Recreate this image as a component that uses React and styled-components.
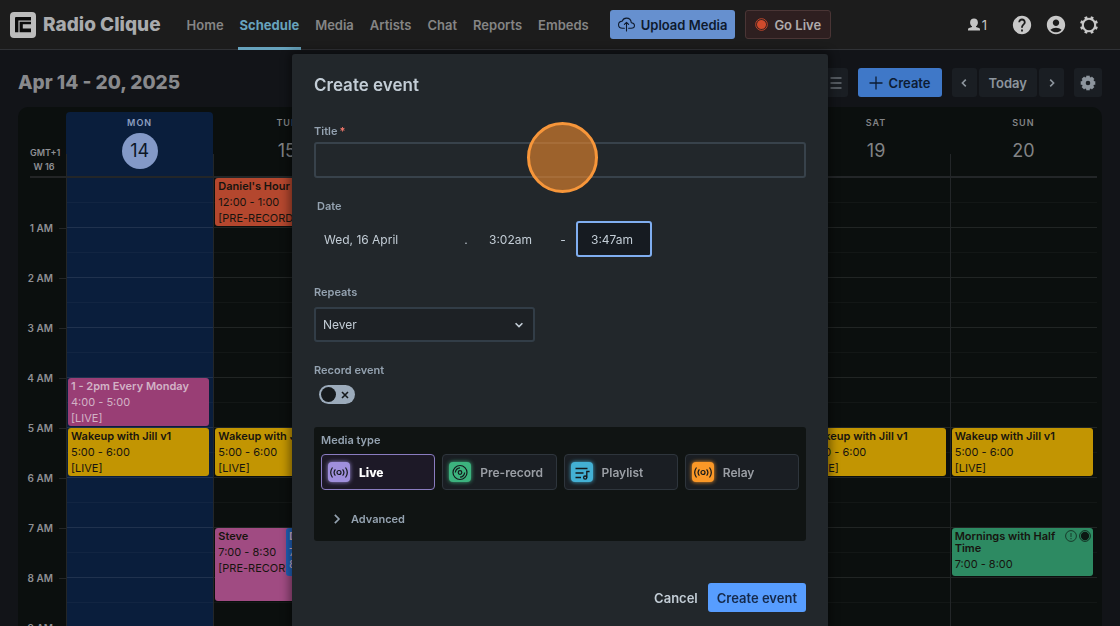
import React, { useState } from "react";
import styled, { createGlobalStyle } from "styled-components";
import { MdAccountCircle, MdHelp } from "react-icons/md";
import { IoCloudUploadOutline } from "react-icons/io5";

const GlobalStyle = createGlobalStyle`
  * {
    box-sizing: border-box;
  }
  body {
    margin: 0;
    background-color: #121418;
    color: #8f9094;
    font-family: Inter, "Liberation Sans", sans-serif;
    font-size: 13px;
    -webkit-font-smoothing: antialiased;
  }
  button, input, select {
    font-family: inherit;
    font-size: inherit;
    margin: 0;
  }
`;

const Page = styled.div`
  height: 100vh;
  display: flex;
  flex-direction: column;
  overflow: hidden;
`;

/* top navigation */

const Nav = styled.header`
  flex: none;
  height: 50px;
  display: flex;
  align-items: center;
  padding: 0 21px 0 10px;
  background-color: #1c1c1c;
  border-bottom: 1px solid #303236;
`;

const Brand = styled.a`
  display: flex;
  align-items: center;
  gap: 7px;
  color: #a9abad;
  font-size: 19px;
  font-weight: 800;
  text-decoration: none;
  white-space: nowrap;
`;

const Links = styled.nav`
  align-self: stretch;
  display: flex;
  gap: 12px;
  margin: 0 19px 0 24px;
`;

const NavLink = styled.a`
  display: flex;
  align-items: center;
  padding: 3px 2px 0;
  margin-bottom: -1px;
  border-bottom: 3px solid ${(props) => (props.$active ? "#67a3bd" : "transparent")};
  color: ${(props) => (props.$active ? "#67a3bd" : "#858585")};
  font-weight: ${(props) => (props.$active ? 700 : 600)};
  text-decoration: none;
`;

const Button = styled.button`
  height: 29px;
  display: flex;
  align-items: center;
  justify-content: center;
  gap: 6px;
  padding: 0 10px;
  border: none;
  border-radius: 3px;
  background-color: #1a1e23;
  color: #8d959d;
  font-weight: 600;
  white-space: nowrap;
  cursor: pointer;
`;

const UploadButton = styled(Button)`
  margin-right: 10px;
  padding: 0 8px;
  background-color: #6690cf;
  color: #0e1a2d;
`;

const LiveButton = styled(Button)`
  padding: 0 9px;
  border: 1px solid #4a3535;
  background-color: #2e1f20;
  color: #b0acac;
`;

const NavTools = styled.div`
  display: flex;
  align-items: center;
  gap: 12px;
  margin-left: auto;
`;

const Listeners = styled.button`
  display: flex;
  align-items: center;
  gap: 2px;
  margin-right: 12px;
  padding: 0;
  border: none;
  background: none;
  color: #c4c4c4;
`;

const IconButton = styled.button`
  display: flex;
  padding: 0;
  border: none;
  background: none;
  color: #c8c8c8;
  cursor: pointer;
`;

/* schedule */

const Toolbar = styled.div`
  flex: none;
  display: flex;
  align-items: center;
  gap: 10px;
  padding: 18px 18px 10px;
`;

const Range = styled.h1`
  flex: 1;
  margin: 0;
  color: #88898c;
  font-size: 19px;
  line-height: 29px;
  font-weight: 800;
`;

const CreateButton = styled(Button)`
  padding: 0 11px;
  background-color: #3f78c8;
  color: #0d1c33;
`;

const Pager = styled.div`
  display: flex;
  gap: 2px;
`;

const SquareButton = styled(Button)`
  width: ${(props) => props.$width || 28}px;
  padding: 0;
`;

const Calendar = styled.main`
  flex: 1;
  display: grid;
  grid-template-columns: 48px repeat(7, 1fr);
  margin: 0 18px;
  padding: 5px 5px 0 0;
  border-radius: 10px 10px 0 0;
  background-color: #0b0f0e;
  overflow: hidden;
`;

const Gutter = styled.div`
  min-width: 0;
`;

const Zone = styled.div`
  height: 66px;
  margin-left: 12px;
  padding: 34px 8px 0 0;
  border-bottom: 2px solid #232526;
  font-size: 9px;
  line-height: 14px;
  font-weight: 600;
  text-align: center;
  white-space: nowrap;
`;

const Hours = styled.div`
  padding-top: 25px;
`;

const Hour = styled.div`
  height: 50px;
  display: flex;
  align-items: center;
  justify-content: flex-end;
  gap: 6px;
  font-size: 10px;
  font-weight: 600;
  white-space: nowrap;

  &::after {
    content: "";
    width: 7px;
    height: 1px;
    background-color: #242627;
  }
`;

const Day = styled.section`
  min-width: 0;
  border-radius: 4px 4px 0 0;
  background-color: ${(props) => (props.$today ? "#0a1e3c" : "transparent")};
`;

const DayHead = styled.div`
  height: 66px;
  display: flex;
  flex-direction: column;
  align-items: center;
  gap: 4px;
  padding-top: 5px;
  border-bottom: 2px solid #232628;
  background: linear-gradient(#232628, #232628) left bottom / 1px 22px no-repeat;
  color: ${(props) => (props.$today ? "#8d9fc0" : "#828385")};
`;

const DayName = styled.span`
  font-size: 9px;
  line-height: 12px;
  font-weight: 600;
  letter-spacing: 1px;
`;

const DayNumber = styled.span`
  width: 36px;
  height: 36px;
  border-radius: 50%;
  background-color: ${(props) => (props.$today ? "#8399c7" : "transparent")};
  color: ${(props) => (props.$today ? "#0c1626" : "#828385")};
  font-size: 18px;
  line-height: 36px;
  text-align: center;
`;

const Slots = styled.div`
  display: grid;
  grid-template-columns: 100%;
  grid-template-rows: repeat(20, 25px);
  border-left: 1px solid #232628;
  background-image: linear-gradient(transparent 49px, rgba(255, 255, 255, 0.09) 49px),
    linear-gradient(
      transparent 24px,
      rgba(255, 255, 255, 0.03) 24px,
      rgba(255, 255, 255, 0.03) 25px,
      transparent 25px
    );
  background-size: 100% 50px;
`;

const EventBox = styled.article`
  grid-column: 1;
  grid-row: ${(props) => props.$start * 2 + 1} / span ${(props) => props.$length * 2};
  display: flex;
  flex-direction: column;
  gap: 4px;
  margin: 0 4px 2px 1px;
  padding: 2px 2px 2px 3px;
  border-radius: 3px;
  background-color: ${(props) => props.$color};
  color: ${(props) => (props.$light ? "#d2b3c6" : "#17140f")};
  font-size: 11px;
  line-height: 12px;
  overflow: hidden;
`;

const OverlapBox = styled(EventBox)`
  width: 50px;
  margin-left: 49%;
`;

const EventTop = styled.div`
  display: flex;
  justify-content: space-between;
  gap: 4px;
`;

const EventTitle = styled.span`
  font-weight: 600;
`;

const EventIcons = styled.span`
  flex: none;
  display: flex;
  gap: 2px;
  height: 12px;
`;

/* dialog */

const Overlay = styled.div`
  position: fixed;
  inset: 0;
  display: flex;
  justify-content: center;
  padding-top: 54px;
`;

const Dialog = styled.form`
  width: 536px;
  max-width: 100%;
  min-height: 100%;
  padding: 0 22px;
  border-radius: 3px 3px 0 0;
  background-color: #22272b;
  box-shadow: 0 0 8px 3px rgba(0, 0, 0, 0.4);
  color: #c3cdd6;
`;

const DialogTitle = styled.h2`
  margin: 0;
  padding: 19px 0 27px;
  font-size: 17px;
  line-height: 24px;
  font-weight: 600;
`;

const Label = styled.label`
  display: block;
  color: #94a2b0;
  font-size: 11px;
  line-height: 14px;
  font-weight: 600;
`;

const Required = styled.span`
  margin-left: 2px;
  color: #f0776a;
`;

const Field = styled.div`
  margin-bottom: ${(props) => props.$space}px;
`;

const TitleBox = styled.div`
  position: relative;
  margin-top: 4px;
`;

const TextInput = styled.input`
  display: block;
  width: 100%;
  height: 36px;
  padding: 0 8px;
  border: 2px solid #38424b;
  border-radius: 3px;
  background-color: #22272b;
  color: #c3cdd6;
  outline: none;
`;

// click highlight shown over the title field
const ClickMark = styled.span`
  position: absolute;
  top: -20px;
  left: 213px;
  width: 71px;
  height: 71px;
  border: 3px solid #f7963a;
  border-radius: 50%;
  background-color: rgba(247, 142, 45, 0.58);
  pointer-events: none;
`;

const DateLabel = styled(Label)`
  padding-left: 3px;
`;

const DateRow = styled.div`
  display: flex;
  align-items: center;
  margin-top: 8px;
`;

const DateInput = styled.input`
  width: 144px;
  height: 36px;
  padding: 0 8px;
  border: 2px solid transparent;
  background: none;
  color: #c3cdd6;
  font-size: 12px;
  outline: none;
`;

const TimeInput = styled(DateInput)`
  width: 76px;
  padding: 0 13px;
  border-color: ${(props) => (props.$active ? "#80aef0" : "transparent")};
  border-radius: 3px;
  background-color: ${(props) => (props.$active ? "#161b21" : "transparent")};
`;

const Separator = styled.span`
  width: ${(props) => props.$width}px;
  font-size: 12px;
  text-align: center;
`;

const SelectBox = styled.div`
  display: grid;
  align-items: center;
  width: 221px;
  margin-top: 8px;

  > * {
    grid-area: 1 / 1;
  }
  svg {
    justify-self: end;
    margin-right: 11px;
    pointer-events: none;
  }
`;

const Select = styled.select`
  width: 100%;
  height: 35px;
  padding: 0 7px;
  border: 2px solid #323d47;
  border-radius: 3px;
  background-color: #1d2125;
  color: #c3cdd6;
  font-size: 12px;
  appearance: none;
  outline: none;
`;

const Switch = styled.div`
  display: grid;
  align-items: center;
  width: 36px;
  margin: 8px 0 0 5px;

  > * {
    grid-area: 1 / 1;
  }
  svg {
    justify-self: ${(props) => (props.$on ? "start" : "end")};
    margin: 0 6px;
    pointer-events: none;
  }
`;

const SwitchInput = styled.input`
  appearance: none;
  display: flex;
  align-items: center;
  width: 36px;
  height: 19px;
  padding: 0 2px;
  border-radius: 10px;
  background-color: #9cabbb;

  &::before {
    content: "";
    width: 15px;
    height: 15px;
    border-radius: 50%;
    background-color: #161a1d;
  }
  &:checked {
    justify-content: flex-end;
    background-color: #4bce97;
  }
`;

const MediaPanel = styled.fieldset`
  min-width: 0;
  margin: 0;
  padding: 6px 7px 15px;
  border: none;
  border-radius: 3px;
  background-color: #101413;
`;

const MediaTitle = styled(Label)`
  margin-bottom: 7px;
`;

const MediaTypes = styled.div`
  display: grid;
  grid-template-columns: repeat(4, 1fr);
  gap: 7px;
`;

const MediaCard = styled.button`
  height: 36px;
  display: flex;
  align-items: center;
  gap: 9px;
  padding: 0 6px;
  border: 1px solid ${(props) => (props.$active ? "#8a7cc0" : "#2e353c")};
  border-radius: 4px;
  background-color: ${(props) => (props.$active ? "#1d1927" : "#1a1e23")};
  color: ${(props) => (props.$active ? "#ffffff" : "#9b9fa5")};
  font-size: 12px;
  font-weight: ${(props) => (props.$active ? 800 : 600)};
  white-space: nowrap;
  cursor: pointer;
`;

const MediaIcon = styled.span`
  display: flex;
  padding: 1px 2px;
  border-radius: 4px;
  background-color: ${(props) => props.$color};
  box-shadow: 0 0 4px ${(props) => props.$color};
  color: #14181b;
`;

const Advanced = styled.button`
  display: flex;
  align-items: center;
  gap: 8px;
  margin: 22px 0 0 10px;
  padding: 0;
  border: none;
  background: none;
  color: #94a2b0;
  font-size: 11px;
  line-height: 14px;
  font-weight: 600;
  cursor: pointer;
`;

const Footer = styled.div`
  display: flex;
  justify-content: flex-end;
  padding-top: 42px;
`;

const CancelButton = styled(Button)`
  background: none;
  color: #c3cdd6;
`;

const SubmitButton = styled(Button)`
  padding: 0 9px;
  background-color: #579dff;
  color: #15294a;
`;

/* icons */

const Logo = () => (
  <svg width="26" height="26" viewBox="0 0 26 26">
    <rect width="26" height="26" rx="4" fill="#bcbcbc" />
    <path d="M5 20.3V6a1 1 0 0 1 1-1h15v3.4H8.4v11.9z" fill="#0c0c0c" />
    <path d="M9.6 20.3V9.7H21v2.5h-8.2v4.2H21v3.9z" fill="#0c0c0c" />
  </svg>
);

const PersonIcon = () => (
  <svg width="12" height="13" viewBox="0 0 12 13" fill="currentColor">
    <path d="M6 .5c2.4 0 3.9 1.6 3.9 3.9 0 1.6-.7 3-1.9 3.9v.7l3 1.1c.7.3 1 .7 1 1.4v1H0v-1c0-.7.3-1.1 1-1.4l3-1.1v-.7C2.8 7.4 2.1 6 2.1 4.4 2.1 2.1 3.6.5 6 .5z" />
  </svg>
);

const angles = [0, 45, 90, 135, 180, 225, 270, 315];

const Cog = ({ size, bold }) => (
  <svg width={size} height={size} viewBox="0 0 18 18" fill="none" stroke="currentColor">
    <circle cx="9" cy="9" r={bold ? 4.8 : 5.6} strokeWidth={bold ? 4.4 : 1.9} />
    {angles.map((a) => (
      <path
        key={a}
        d={bold ? "M9 .8v3" : "M9 .9v2.4"}
        strokeWidth={bold ? 4 : 2.6}
        transform={`rotate(${bold ? a : a + 22.5} 9 9)`}
      />
    ))}
  </svg>
);

const RecordDot = ({ size, dot }) => (
  <svg width={size} height={size} viewBox="0 0 12 12">
    <circle cx="6" cy="6" r="5.4" fill="none" stroke={dot} strokeWidth="0.8" />
    <circle cx="6" cy="6" r="4.2" fill={dot} />
  </svg>
);

const AlertIcon = () => (
  <svg width="12" height="12" viewBox="0 0 12 12" fill="none" stroke="#173b2b">
    <circle cx="6" cy="6" r="5.4" />
    <path d="M6 3v4M6 8v1.2" />
  </svg>
);

const PlusIcon = () => (
  <svg width="14" height="14" viewBox="0 0 14 14" stroke="currentColor" strokeWidth="1.3">
    <path d="M7 .5v13M.5 7h13" />
  </svg>
);

const ListIcon = () => (
  <svg width="16" height="12" viewBox="0 0 16 12" stroke="currentColor" strokeWidth="1.2">
    <path d="M0 1h2M4.5 1h11M0 6h2M4.5 6h11M0 11h2M4.5 11h11" />
  </svg>
);

const Chevron = ({ turn = 0, size = 10, width = 1.6 }) => (
  <svg width={size} height={size} viewBox="0 0 10 10" fill="none" stroke="currentColor" strokeWidth={width}>
    <path d="M3.2 1.6 6.6 5 3.2 8.4" transform={`rotate(${turn} 5 5)`} />
  </svg>
);

const CrossIcon = () => (
  <svg width="8" height="8" viewBox="0 0 8 8" stroke="#161a1d" strokeWidth="1.6">
    <path d="M1 1l6 6M7 1L1 7" />
  </svg>
);

const Wave = () => (
  <svg width="18" height="18" viewBox="0 0 18 18" fill="none" stroke="currentColor" strokeWidth="1.2">
    <circle cx="9" cy="9.5" r="2" />
    <path d="M5.4 6.3a5 5 0 0 0 0 6.4M12.6 6.3a5 5 0 0 1 0 6.4M2.5 4.5a8.5 8.5 0 0 0 0 10M15.5 4.5a8.5 8.5 0 0 1 0 10" />
  </svg>
);

const Disc = () => (
  <svg width="18" height="18" viewBox="0 0 18 18" fill="none" stroke="currentColor" strokeWidth="1.2">
    <circle cx="9" cy="9.5" r="7" />
    <circle cx="9" cy="9.5" r="1.8" />
    <path d="M4.4 9.5A4.6 4.6 0 0 1 9 4.9M13.6 9.5A4.6 4.6 0 0 1 9 14.1" />
  </svg>
);

const Playlist = () => (
  <svg width="18" height="18" viewBox="0 0 18 18" fill="none" stroke="currentColor" strokeWidth="1.3">
    <path d="M2.5 5.5h12M2.5 10h8M2.5 14.5h5.500M13.800 14.500V8.500h2.800" />
    <circle cx="12.2" cy="14.6" r="1.6" />
  </svg>
);

const days = ["MON", "TUE", "WED", "THU", "FRI", "SAT", "SUN"];

const wakeup = {
  title: "Wakeup with Jill v1",
  time: "5:00 - 6:00",
  tag: "[LIVE]",
  start: 5,
  length: 1,
  color: "#c29502",
};

const events = {
  MON: [
    {
      title: "1 - 2pm Every Monday",
      time: "4:00 - 5:00",
      tag: "[LIVE]",
      start: 4,
      length: 1,
      color: "#993e75",
      light: true,
    },
    wakeup,
  ],
  TUE: [
    { title: "Daniel's Hour", time: "12:00 - 1:00", tag: "[PRE-RECORD]", start: 0, length: 1, color: "#b4472e" },
    wakeup,
    { title: "Steve", time: "7:00 - 8:30", tag: "[PRE-RECORD]", start: 7, length: 1.5, color: "#a04b82" },
    { title: "D", time: "7:00 - 8:00", start: 7, length: 1, color: "#2060b8", light: true, overlap: true },
  ],
  SAT: [wakeup],
  SUN: [
    wakeup,
    { title: "Mornings with Half Time", time: "7:00 - 8:00", start: 7, length: 1, color: "#2d8a62", icons: true },
  ],
};

const mediaTypes = [
  { name: "Live", color: "#9f8fdc", icon: <Wave /> },
  { name: "Pre-record", color: "#3cb37e", icon: <Disc /> },
  { name: "Playlist", color: "#43b0d4", icon: <Playlist /> },
  { name: "Relay", color: "#fb9827", icon: <Wave /> },
];

const Event = ({ event }) => {
  const Box = event.overlap ? OverlapBox : EventBox;
  return (
    <Box $start={event.start} $length={event.length} $color={event.color} $light={event.light}>
      <EventTop>
        <EventTitle>{event.title}</EventTitle>
        {event.icons && (
          <EventIcons>
            <AlertIcon />
            <RecordDot size={12} dot="#0c1813" />
          </EventIcons>
        )}
      </EventTop>
      <span>{event.time}</span>
      {event.tag && <span>{event.tag}</span>}
    </Box>
  );
};

const CreateEvent = () => {
  const [title, setTitle] = useState("");
  const [record, setRecord] = useState(false);
  const [media, setMedia] = useState("Live");

  return (
    <Overlay>
      <Dialog onSubmit={(e) => e.preventDefault()}>
        <DialogTitle>Create event</DialogTitle>

        <Field $space={21}>
          <Label htmlFor="title">
            Title
            <Required>*</Required>
          </Label>
          <TitleBox>
            <TextInput id="title" value={title} onChange={(e) => setTitle(e.target.value)} />
            <ClickMark />
          </TitleBox>
        </Field>

        <Field $space={28}>
          <DateLabel htmlFor="date">Date</DateLabel>
          <DateRow>
            <DateInput id="date" defaultValue="Wed, 16 April" />
            <Separator $width={16}>.</Separator>
            <TimeInput aria-label="Start time" defaultValue="3:02am" />
            <Separator $width={26}>-</Separator>
            <TimeInput aria-label="End time" defaultValue="3:47am" $active />
          </DateRow>
        </Field>

        <Field $space={21}>
          <Label htmlFor="repeats">Repeats</Label>
          <SelectBox>
            <Select id="repeats">
              <option>Never</option>
            </Select>
            <Chevron turn={90} />
          </SelectBox>
        </Field>

        <Field $space={23}>
          <Label htmlFor="record">Record event</Label>
          <Switch $on={record}>
            <SwitchInput
              id="record"
              type="checkbox"
              checked={record}
              onChange={(e) => setRecord(e.target.checked)}
            />
            <CrossIcon />
          </Switch>
        </Field>

        <MediaPanel>
          <MediaTitle as="div">Media type</MediaTitle>
          <MediaTypes>
            {mediaTypes.map((type) => (
              <MediaCard
                key={type.name}
                type="button"
                $active={media === type.name}
                onClick={() => setMedia(type.name)}
              >
                <MediaIcon $color={type.color}>{type.icon}</MediaIcon>
                {type.name}
              </MediaCard>
            ))}
          </MediaTypes>
          <Advanced type="button">
            <Chevron size={12} width={1.4} />
            Advanced
          </Advanced>
        </MediaPanel>

        <Footer>
          <CancelButton type="button">Cancel</CancelButton>
          <SubmitButton type="submit">Create event</SubmitButton>
        </Footer>
      </Dialog>
    </Overlay>
  );
};

const App = () => {
  return (
    <Page>
      <GlobalStyle />
      <Nav>
        <Brand href="#">
          <Logo />
          Radio Clique
        </Brand>
        <Links>
          {["Home", "Schedule", "Media", "Artists", "Chat", "Reports", "Embeds"].map((name) => (
            <NavLink key={name} href="#" $active={name === "Schedule"}>
              {name}
            </NavLink>
          ))}
        </Links>
        <UploadButton>
          <IoCloudUploadOutline size={17} />
          Upload Media
        </UploadButton>
        <LiveButton>
          <RecordDot size={13} dot="#cf4a2c" />
          Go Live
        </LiveButton>
        <NavTools>
          <Listeners>
            <PersonIcon />1
          </Listeners>
          <IconButton aria-label="Help">
            <MdHelp size={22} />
          </IconButton>
          <IconButton aria-label="Account">
            <MdAccountCircle size={22} />
          </IconButton>
          <IconButton aria-label="Settings">
            <Cog size={20} />
          </IconButton>
        </NavTools>
      </Nav>

      <Toolbar>
        <Range>Apr 14 - 20, 2025</Range>
        <SquareButton aria-label="List view">
          <ListIcon />
        </SquareButton>
        <CreateButton>
          <PlusIcon />
          Create
        </CreateButton>
        <Pager>
          <SquareButton $width={25} aria-label="Previous week">
            <Chevron turn={180} />
          </SquareButton>
          <Button>Today</Button>
          <SquareButton $width={25} aria-label="Next week">
            <Chevron />
          </SquareButton>
        </Pager>
        <SquareButton aria-label="Calendar settings">
          <Cog size={16} bold />
        </SquareButton>
      </Toolbar>

      <Calendar>
        <Gutter>
          <Zone>
            GMT+1
            <br />W 16
          </Zone>
          <Hours>
            {[1, 2, 3, 4, 5, 6, 7, 8, 9].map((hour) => (
              <Hour key={hour}>{hour} AM</Hour>
            ))}
          </Hours>
        </Gutter>
        {days.map((day, i) => (
          <Day key={day} $today={i === 0}>
            <DayHead $today={i === 0}>
              <DayName>{day}</DayName>
              <DayNumber $today={i === 0}>{14 + i}</DayNumber>
            </DayHead>
            <Slots>
              {(events[day] || []).map((event) => (
                <Event key={event.title} event={event} />
              ))}
            </Slots>
          </Day>
        ))}
      </Calendar>

      <CreateEvent />
    </Page>
  );
};

export default App;
